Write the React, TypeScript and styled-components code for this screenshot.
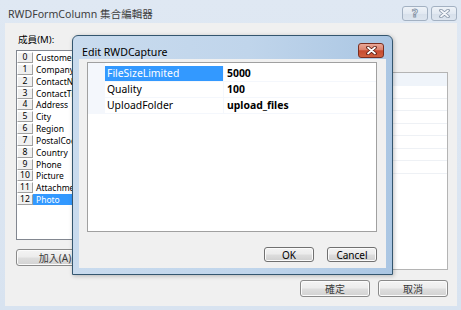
import styled, { createGlobalStyle } from "styled-components";

const GlobalStyle = createGlobalStyle`
  html, body {
    margin: 0;
    padding: 0;
  }
  body {
    width: 461px;
    height: 310px;
    overflow: hidden;
    background: #ffffff;
    font-family: "Noto Sans", "Noto Sans CJK TC", sans-serif;
    color: #000;
  }
  * {
    box-sizing: border-box;
  }
`;

const members = [
  "Customer",
  "CompanyName",
  "ContactName",
  "ContactTitle",
  "Address",
  "City",
  "Region",
  "PostalCode",
  "Country",
  "Phone",
  "Picture",
  "Attachment",
  "Photo",
];

const properties = [
  { name: "FileSizeLimited", value: "5000" },
  { name: "Quality", value: "100" },
  { name: "UploadFolder", value: "upload_files" },
];

const CloseGlyph = ({ color, outline }: { color: string; outline: string }) => (
  <svg width="11" height="9" viewBox="0 0 11 9">
    <path d="M2 1.5 L9 7.5 M9 1.5 L2 7.5" stroke={outline} strokeWidth="3.6" strokeLinecap="round" />
    <path d="M2 1.5 L9 7.5 M9 1.5 L2 7.5" stroke={color} strokeWidth="1.8" strokeLinecap="round" />
  </svg>
);

const App = () => {
  return (
    <>
      <GlobalStyle />
      <Screen>
        <Frame>
          <TitleBar>
            <Title>RWDFormColumn 集合編輯器</Title>
            <CaptionButtons>
              <CaptionButton>
                <HelpGlyph>?</HelpGlyph>
              </CaptionButton>
              <CaptionButton>
                <CloseGlyph color="#f3f6fa" outline="#8896a8" />
              </CaptionButton>
            </CaptionButtons>
          </TitleBar>
          <Body>
            <Main>
              <LeftColumn>
                <MemberLabel>成員(M):</MemberLabel>
                <ListBox>
                  {members.map((m, i) => (
                    <ListRow key={m}>
                      <IndexCell>{i}</IndexCell>
                      <ItemName $selected={i === members.length - 1}>{m}</ItemName>
                    </ListRow>
                  ))}
                </ListBox>
                <WinButton $width={78}>加入(A)</WinButton>
              </LeftColumn>
              <RightColumn>
                <PropertyPanel>
                  <PanelHeader />
                  {Array.from({ length: 7 }).map((_, i) => (
                    <PanelRow key={i} />
                  ))}
                </PropertyPanel>
              </RightColumn>
            </Main>
            <Footer>
              <WinButton $width={70}>確定</WinButton>
              <WinButton $width={70}>取消</WinButton>
            </Footer>
          </Body>
        </Frame>

        <Dialog>
          <DialogTitleBar>
            <DialogTitle>Edit RWDCapture</DialogTitle>
            <RedClose>
              <CloseGlyph color="#ffffff" outline="#5a1a10" />
            </RedClose>
          </DialogTitleBar>
          <DialogBody>
            <PropGrid>
              <GridRows>
                {properties.map((p, i) => (
                  <GridRow key={p.name}>
                    <Gutter />
                    <PropName $selected={i === 0}>{p.name}</PropName>
                    <PropValue>{p.value}</PropValue>
                  </GridRow>
                ))}
              </GridRows>
            </PropGrid>
            <DialogButtons>
              <SmallButton>OK</SmallButton>
              <SmallButton>Cancel</SmallButton>
            </DialogButtons>
          </DialogBody>
        </Dialog>
      </Screen>
    </>
  );
};

export default App;

const Screen = styled.div`
  position: relative;
  width: 461px;
  height: 310px;
  overflow: hidden;
`;

const Frame = styled.div`
  width: 100%;
  height: 100%;
  display: flex;
  flex-direction: column;
  padding: 0 4px 4px 5px;
  background: linear-gradient(180deg, #dfe8f3 0%, #d8e3f0 100%);
`;

const TitleBar = styled.div`
  height: 23px;
  display: flex;
  align-items: flex-start;
`;

const Title = styled.div`
  flex: 1;
  padding: 7px 0 0 3px;
  font-size: 10.6px;
  line-height: 14px;
  color: #3d3d3d;
`;

const CaptionButtons = styled.div`
  display: flex;
  gap: 3px;
  margin-top: 6px;
`;

const CaptionButton = styled.div`
  width: 26px;
  height: 15px;
  display: flex;
  align-items: center;
  justify-content: center;
  border: 1px solid #a3b1c2;
  border-radius: 3px;
  background: linear-gradient(180deg, #eef3f8 0%, #e2e9f2 50%, #d7e0eb 51%, #dde5ef 100%);
`;

const HelpGlyph = styled.span`
  font-family: "DejaVu Sans", sans-serif;
  font-weight: bold;
  font-size: 11px;
  line-height: 11px;
  color: #f3f6fa;
  -webkit-text-stroke: 0.9px #8896a8;
`;

const Body = styled.div`
  flex: 1;
  display: flex;
  flex-direction: column;
  background: #f0f0f0;
  padding: 11px 9px 9px 11px;
`;

const Main = styled.div`
  flex: 1;
  display: flex;
  gap: 24px;
  min-height: 0;
`;

const LeftColumn = styled.div`
  width: 160px;
  display: flex;
  flex-direction: column;
`;

const MemberLabel = styled.div`
  height: 12px;
  padding-left: 2px;
  font-size: 9.6px;
  line-height: 12px;
`;

const ListBox = styled.div`
  margin-top: 4px;
  height: 190px;
  border: 1px solid #828790;
  background: #ffffff;
  padding-top: 1px;
  overflow: hidden;
`;

const ListRow = styled.div`
  display: flex;
  height: 11.85px;
`;

const IndexCell = styled.div`
  width: 16px;
  height: 11px;
  border: 1px solid;
  border-color: #ffffff #a0a0a0 #a0a0a0 #ffffff;
  background: #f0f0f0;
  text-align: center;
  font-size: 8.6px;
  line-height: 9px;
`;

const ItemName = styled.div<{ $selected?: boolean }>`
  flex: 1;
  padding-left: 3px;
  font-size: 8.5px;
  line-height: 11px;
  height: 11px;
  white-space: nowrap;
  background: ${(p) => (p.$selected ? "#3399ff" : "transparent")};
  color: ${(p) => (p.$selected ? "#ffffff" : "#000000")};
`;

const WinButton = styled.div<{ $width: number }>`
  width: ${(p) => p.$width}px;
  height: 17px;
  margin-top: 9px;
  display: flex;
  align-items: center;
  justify-content: center;
  border: 1px solid #8a8a8a;
  border-radius: 3px;
  background: linear-gradient(180deg, #f4f4f4 0%, #ececec 48%, #dedede 52%, #d2d2d2 100%);
  box-shadow: inset 0 0 0 1px #fbfbfb;
  font-size: 10px;
  color: #3a3a3a;
`;

const RightColumn = styled.div`
  flex: 1;
  padding-top: 38px;
`;

const PropertyPanel = styled.div`
  height: 198px;
  border: 1px solid #b4b4b4;
  background: #ffffff;
`;

const PanelHeader = styled.div`
  height: 13px;
  background: #eff4fa;
`;

const PanelRow = styled.div`
  height: 12.5px;
  border-bottom: 1px solid #eef1f5;
`;

const Footer = styled.div`
  display: flex;
  justify-content: flex-end;
  gap: 8px;
  margin-top: 1px;
`;

const Dialog = styled.div`
  position: absolute;
  left: 72px;
  top: 35px;
  width: 321px;
  height: 240px;
  display: flex;
  flex-direction: column;
  padding: 0 6px 6px 6px;
  border: 1px solid #34566f;
  border-radius: 6px 6px 0 0;
  background: linear-gradient(90deg, #c9dbee 0%, #c0d5eb 55%, #aac6e3 100%);
  box-shadow: 1px 1px 4px rgba(0, 0, 0, 0.25);
`;

const DialogTitleBar = styled.div`
  height: 23px;
  display: flex;
  align-items: flex-start;
`;

const DialogTitle = styled.div`
  flex: 1;
  padding: 9px 0 0 3px;
  font-size: 10.6px;
  line-height: 14px;
  color: #000000;
`;

const RedClose = styled.div`
  width: 26px;
  height: 15px;
  margin: 7px 2px 0 0;
  display: flex;
  align-items: center;
  justify-content: center;
  border: 1px solid #7a2e20;
  border-radius: 3px;
  background: linear-gradient(180deg, #e9a898 0%, #dc826c 45%, #c74a2f 52%, #d0603f 100%);
`;

const DialogBody = styled.div`
  flex: 1;
  display: flex;
  flex-direction: column;
  background: #f0f0f0;
  padding: 3px 9px 6px 8px;
`;

const PropGrid = styled.div`
  height: 170px;
  border: 1px solid #a0a0a0;
  background: #ffffff;
`;

const GridRows = styled.div`
  padding-top: 3px;
  background: linear-gradient(90deg, #f4f7fc 17px, transparent 17px);
`;

const GridRow = styled.div`
  display: flex;
  height: 16px;
  font-size: 10.4px;
  line-height: 15px;
`;

const Gutter = styled.div`
  width: 17px;
`;

const PropName = styled.div<{ $selected?: boolean }>`
  width: 119px;
  padding-left: 2px;
  border-bottom: 1px solid #f4f7fc;
  border-right: 1px solid #f4f7fc;
  background: ${(p) => (p.$selected ? "#3399ff" : "#ffffff")};
  color: ${(p) => (p.$selected ? "#ffffff" : "#000000")};
`;

const PropValue = styled.div`
  flex: 1;
  padding-left: 3px;
  border-bottom: 1px solid #f4f7fc;
  font-weight: bold;
`;

const DialogButtons = styled.div`
  display: flex;
  justify-content: flex-end;
  gap: 13px;
  margin-top: 15px;
`;

const SmallButton = styled.div`
  width: 50px;
  height: 15px;
  display: flex;
  align-items: center;
  justify-content: center;
  border: 1px solid #707070;
  border-radius: 3px;
  background: linear-gradient(180deg, #f2f2f2 0%, #ebebeb 48%, #dddddd 52%, #cfcfcf 100%);
  box-shadow: inset 0 0 0 1px #fbfbfb;
  font-size: 10px;
  color: #000000;
`;
